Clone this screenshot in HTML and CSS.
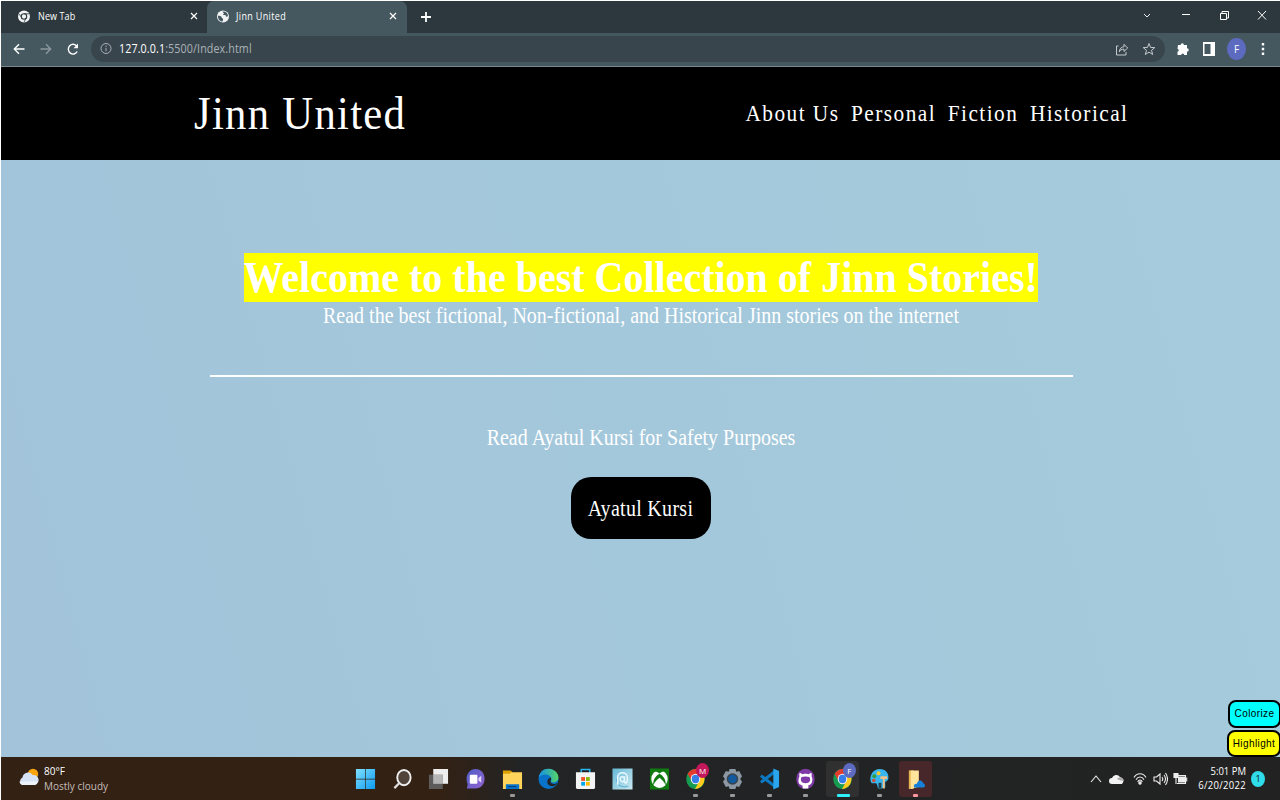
FILE: index.html
```html
<!DOCTYPE html>
<html lang="en">
<head>
<meta charset="utf-8">
<title>Jinn United</title>
<link rel="stylesheet" href="styles.css">
</head>
<body>
<div class="screen">
  <div class="tabs">
    <div class="tab">
      <svg class="fav" viewBox="0 0 12 12"><circle cx="6" cy="6" r="6" fill="#f1f3f4"/><circle cx="6" cy="6" r="2.7" fill="#f1f3f4" stroke="#2d383e" stroke-width="1.1"/><path d="M6 3.3h5M3.7 7.3 1.3 3.5M8.3 7.4 6 11.6" stroke="#2d383e" stroke-width=".8"/></svg>
      <span class="t tab-text">New Tab</span>
      <svg class="x" viewBox="0 0 8 8"><path d="m1 1 6 6M7 1 1 7"/></svg>
    </div>
    <div class="tab active">
      <svg class="fav" viewBox="0 0 12 12"><circle cx="6" cy="6" r="6" fill="#f1f3f4"/><path d="M1 5.200c2 0 4 .6 3.700 2L6.200 8.500 5.500 11C2.800 11 .8 8.500 1 5.200ZM5.500 1.300 7 3 5.800 4.600h2.600l.8 1.700 1.800-.5C10.900 3 9 1 6.600 1Z" fill="#455860"/></svg>
      <span class="t tab-text">Jinn United</span>
      <svg class="x" viewBox="0 0 8 8"><path d="m1 1 6 6M7 1 1 7"/></svg>
    </div>
    <svg class="plus" viewBox="0 0 10 10"><path d="M5 0v10M0 5h10"/></svg>
    <div class="win">
      <svg viewBox="0 0 10 12"><path d="m2 5 3 3 3-3" stroke-width=".9"/></svg>
      <svg viewBox="0 0 10 12"><path d="M1 5.500h8" stroke-width="1"/></svg>
      <svg viewBox="0 0 10 12"><path d="M1.500 4.500h6v6h-6zM3 4V2.500h6.500V9H8" stroke-width="1"/></svg>
      <svg viewBox="0 0 10 12"><path d="m1 2 8 8.500M9 2l-8 8.500"/></svg>
    </div>
  </div>
  <div class="toolbar">
    <svg class="nav-ic" viewBox="0 0 12 12"><path d="M11.500 6H1.500M6 1.300 1.300 6 6 10.700"/></svg>
    <svg class="nav-ic dim" viewBox="0 0 12 12"><path d="M.5 6h10M6 1.300 10.700 6 6 10.700"/></svg>
    <svg class="nav-ic" viewBox="0 0 12 12"><path d="M10.200 8.500A4.700 4.900 0 1 1 9.800 3.200"/><path d="M11 .5v4.700H6.500Z" fill="#fff" stroke="none"/></svg>
    <div class="address">
      <svg class="info" viewBox="0 0 12 12"><circle cx="6" cy="6" r="5"/><path d="M6 5.300v3.500M6 3v1.300"/></svg>
      <span class="t url"><b>127.0.0.1</b>:5500/Index.html</span>
      <svg class="share" viewBox="0 0 14 14"><path d="M3.500 4H1.500v9h9.500v-3M4.300 9.800C4.600 6.500 6.500 4.800 9 4.800V2.300l3.700 3.700L9 9.500V7.200C6.500 7.200 5 8 4.300 9.800Z"/></svg>
      <svg class="share star" viewBox="0 0 14 14"><path d="m7 1.500 1.500 3.900 4.300.2-3.300 2.700 1.200 4.200L7 10.100l-3.700 2.400 1.200-4.200L1.200 5.600l4.300-.2Z"/></svg>
    </div>
    <svg class="ext" viewBox="0 0 12 14"><path fill="#fff" d="M1 3h2.700a1.600 1.800 0 0 1 3.200 0H10v3.200a1.800 1.800 0 0 1 0 3.600V13H7.200a1.500 1.500 0 0 0-3 0H.5V9.800a1.600 1.600 0 0 0 0-3.100Z"/></svg>
    <svg class="ext panel" viewBox="0 0 12 14"><path d="M0 0h12v14H0z" fill="#fff"/><path d="M1.500 2h6v10h-6z" fill="#455860"/></svg>
    <span class="avatar">F</span>
    <svg class="dots" viewBox="0 0 4 14"><path fill="#fff" d="M.8 1h2.400v2.400H.8zM.8 5.800h2.400v2.400H.8zM.8 10.600h2.400V13H.8z"/></svg>
  </div>
  <header class="site-head">
    <span class="t brand">Jinn United</span>
    <nav class="menu"><span class="t">About Us</span><span class="t">Personal</span><span class="t">Fiction</span><span class="t">Historical</span></nav>
  </header>
  <main class="hero">
    <h1 class="headline"><span class="t">Welcome to the best Collection of Jinn Stories!</span></h1>
    <p class="lead"><span class="t">Read the best fictional, Non-fictional, and Historical Jinn stories on the internet</span></p>
    <div class="rule"></div>
    <p class="note"><span class="t">Read Ayatul Kursi for Safety Purposes</span></p>
    <div class="cta"><span class="t">Ayatul Kursi</span></div>
    <div class="float-buttons">
      <div class="fb cyan"><span class="t">Colorize</span></div>
      <div class="fb yellow"><span class="t">Highlight</span></div>
    </div>
  </main>
  <footer class="taskbar">
    <div class="weather">
      <svg viewBox="0 0 20 18"><circle cx="14" cy="6" r="5.200" fill="#fba50c"/><path d="M4 17a4 4 0 0 1-.5-7.500A5.500 5.500 0 0 1 13.500 7a5 5 0 0 1 2 10Z" fill="#d6e3f5"/><path d="M4 17a4 4 0 0 1-3.500-3.500h18A3.500 3.500 0 0 1 15.500 17Z" fill="#eef3fb"/></svg>
      <div class="wtext"><span class="t w1">80°F</span><span class="t w2">Mostly cloudy</span></div>
    </div>
    <div class="apps">
      <div class="app"><svg viewBox="0 0 22 22"><defs><linearGradient id="win" x2="1" y2="1"><stop stop-color="#7fe0ff"/><stop offset="1" stop-color="#0c9bf2"/></linearGradient></defs><path fill="url(#win)" d="M1 .5h9.600v10.200H1zM11.300 .5h9.700v10.200h-9.700zM1 11.400h9.600v10.200H1zM11.300 11.400h9.700v10.200h-9.700z"/></svg></div>
      <div class="app"><svg viewBox="0 0 22 22"><ellipse cx="12.500" cy="9.500" rx="7" ry="8" fill="#51443b" stroke="#eee" stroke-width="2"/><path d="m7.500 15.500-5 5" stroke="#ddd" stroke-width="2.400"/></svg></div>
      <div class="app"><svg viewBox="0 0 22 22"><path fill="#eeeeee" d="M5.500 .5h15.500v15.500H5.500z"/><path fill="#666" fill-opacity=".85" d="M1 6.500h14.500v15H1z"/><path fill="#b5b5b5" d="M5.500 6.500h10V16h-10z"/></svg></div>
      <div class="app"><svg viewBox="0 0 22 22"><defs><linearGradient id="chat" x2="1" y2="1"><stop stop-color="#4e5fc9"/><stop offset="1" stop-color="#9462cf"/></linearGradient></defs><path fill="url(#chat)" d="M11 .5c6 0 9.500 4.500 9.500 10.300 0 6-4 10.200-9.500 10.200H2l.8-4.500C-.5 9 3.500 .5 11 .5Z"/><rect x="5" y="6.500" width="8" height="9.500" rx="1.200" fill="#fff"/><path fill="#ddd4f7" d="m14 10 3-2.500v7.500l-3-2.500Z"/></svg></div>
      <div class="app"><svg viewBox="0 0 22 22"><path fill="#dca000" d="M1 2h8l2 2v5H1z"/><path fill="#ffd45a" d="M1 5.500h7L10 4h11v17.500H1z"/><path fill="#0873ca" d="M4 16.500h14v5H4z"/><path stroke="#003c75" d="M6 19h9"/></svg><i class="dot"></i></div>
      <div class="app"><svg viewBox="0 0 22 22"><defs><linearGradient id="ed" x2="1"><stop stop-color="#1690e6"/><stop offset="1" stop-color="#54d467"/></linearGradient></defs><circle cx="11" cy="11" r="10.500" fill="#0873c9"/><path fill="url(#ed)" d="M.7 9.500C2 3 6-.2 11.500.3c6 .4 10.300 5 9.900 9.700-.3 3.500-3.500 5-6.400 4.500-2-.4-1-1.500-1-3.200C14 5.500 5 4.500.7 9.500Z"/><path fill="#232323" d="M13.500 9.500c1 2-1 3.500-.3 5 1 2 5 2.200 7.300.3-1.300 2.700-4 4-7 3.600-4.500-.7-5.500-7.400 0-8.900Z"/></svg></div>
      <div class="app"><svg viewBox="0 0 22 22"><path d="M6.500 5V1h9v4" fill="none" stroke="#26b8ee" stroke-width="1.500"/><path fill="#f4f4f4" d="M1 4h20v16.500l-1 1H2l-1-1z"/><path fill="#f35325" d="M6.500 9h4v4h-4z"/><path fill="#81bc06" d="M11.500 9h4v4h-4z"/><path fill="#05a6f0" d="M6.500 14h4v4h-4z"/><path fill="#ffba08" d="M11.500 14h4v4h-4z"/></svg></div>
      <div class="app"><svg viewBox="0 0 22 22"><defs><linearGradient id="at" x2="1" y2="1"><stop stop-color="#64b7d4"/><stop offset="1" stop-color="#cceaf2"/></linearGradient></defs><path fill="url(#at)" d="M.5 0h21v22H.5z"/><path fill="none" stroke="#4ca5cc" d="M17 18.500c-5 2-13 0-12-8"/><path fill="none" stroke="#e7f9ff" stroke-width="1.600" d="M6 17V9c0-6 10-6 10 0v3c0 4-3 4-3 1V8M13 11c0-3-4.500-3-4.500 0s3.500 4 4.500 1"/></svg></div>
      <div class="app"><svg viewBox="0 0 22 22"><path fill="#107c10" d="M1 0h20v22H1z"/><ellipse cx="11" cy="11" rx="8.600" ry="9.300" fill="#fff"/><path fill="#107c10" d="M5 3.500c2-.8 4 .3 6 1.800 2-1.500 4-2.600 6-1.800C13.500 .3 8.500 .3 5 3.500ZM8.500 7.200C6 9.500 4 13.500 4.500 17.500 6.500 13.500 9 11.300 11 9.800c2 1.500 4.500 3.700 6.500 7.700.5-4-1.500-8-4-10.300L11 5.500Z"/></svg></div>
      <div class="app"><svg viewBox="0 0 22 22"><use href="#chrome"/></svg><b class="badge pink">M</b><i class="dot"></i></div>
      <div class="app"><svg viewBox="0 0 22 22"><path fill="#8b98a3" d="m8 .5 6 0 1 3 3-.8 3 5.300-2 3 2 3-3 5.300-3-.8-1 3H8l-1-3-3 .8L1 14l2-3-2-3L4 2.700l3 .8Z"/><circle cx="11" cy="11" r="5.300" fill="#12599d" stroke="#38414a" stroke-width="1.500"/></svg><i class="dot"></i></div>
      <div class="app"><svg viewBox="0 0 22 22"><path fill="none" stroke="#0c79c2" stroke-width="3.200" d="M2 7.500 17 19M2 14.500 17 3"/><path fill="#2aa5ee" d="m15 0 6 2.500v17L15 22Z"/></svg><i class="dot"></i></div>
      <div class="app"><svg viewBox="0 0 22 22"><ellipse cx="11" cy="11" rx="9.700" ry="10.700" fill="#803aa7"/><path fill="#fff" d="M5 4.500 8 6c2-.6 4-.6 6 0l3-1.500c.7 1.500.5 2.500.3 3.500 1.500 2 1.500 9-3.300 9.500v3.500H8v-3l-3-1.500C2.500 14 4 9.500 4.700 8 4.400 7 4.300 6 5 4.500Z"/><path fill="#803aa7" d="M7 9c2-.7 6-.7 8 0 2 3 .5 6.500-4 6.500S5 12 7 9Z"/></svg><i class="dot"></i></div>
      <div class="app current"><svg viewBox="0 0 22 22"><g id="chrome"><ellipse cx="11" cy="11" rx="9.700" ry="10.700" fill="#169b50"/><path fill="#e33b2e" d="M2.700 5.500C7-1.500 16-1 19.500 6H11L7 13Z"/><path fill="#ffc91e" d="M19.500 6c3 7-1.500 15.500-9 15.500L15 13 14 6Z"/><ellipse cx="11" cy="11" rx="5" ry="5.500" fill="#f3f3f3"/><ellipse cx="11" cy="11" rx="3.900" ry="4.400" fill="#367eea"/></g></svg><b class="badge blue">F</b><i class="dot cy"></i></div>
      <div class="app"><svg viewBox="0 0 22 22"><path fill="#38b5ee" d="M11 .5c7 0 10 5 9.300 10-.3 2-2 3-3.300 3.500v6L11 21.500C8 21 9.500 16 7 15.500S2 17 1.500 12C1 6 5 .5 11 .5Z"/><circle cx="10" cy="5" r="2" fill="#f9c82b"/><circle cx="5.500" cy="8" r="2" fill="#369c3a"/><circle cx="5" cy="12.500" r="1.800" fill="#d44a32"/><path fill="#263d45" d="M10 15h3v6h-3z"/><path fill="#f2bf87" d="M12 8h7v3h-7zM14.500 11h2v10h-2z"/></svg><i class="dot"></i></div>
      <div class="app alert"><svg viewBox="0 0 22 22"><path fill="#e5b34f" d="M4 2h5v19.500H4z"/><path fill="#ffe49b" d="M6 2h8.500v17L6 21.500z"/><path fill="#1681d7" d="M9.500 20c-1-3 1-4.500 3-4 1-5 6-4 6.500-.5 2.500.5 2.500 4 .5 4.500Z"/></svg><i class="dot pk"></i></div>
    </div>
    <div class="tray">
      <svg class="chev" viewBox="0 0 12 12"><path d="m1 9 5-6 5 6" /></svg>
      <svg class="cloud" viewBox="0 0 16 12"><path fill="#f3f3f3" stroke="none" d="M3 11a3 3 0 0 1 0-6 4.500 4.500 0 0 1 8-1 4 4 0 0 1 2 7Z"/><path fill="#aaa" stroke="none" d="M8 6c2-3 7-1 7 2-2-.5-4 0-7-2Z"/></svg>
      <svg class="wifi" viewBox="0 0 14 14"><path d="M1 5.500c3-5 9-5 12 0M3 7.700c2-3.700 6-3.700 8 0M4.700 10c1-2.700 3.600-2.700 4.600 0"/><circle cx="7" cy="11" r="1.200" fill="#eee"/></svg>
      <svg class="sound" viewBox="0 0 15 14"><path d="M1 5h2.500L7 2v10L3.500 9H1ZM9 5q1.500 2 0 4M11 3q3 4 0 8M12.500 1q4 6 0 12"/></svg>
      <svg class="batt" viewBox="0 0 15 14"><path d="M5 3.500h7.500v8H4"/><path d="M5.500 5h6v5h-6z" fill="#eee"/><path d="M13.700 5.500v4" /><path d="M1 1.500h4v4H1zM3 5v7" fill="#eee"/></svg>
      <div class="clock"><span class="t time">5:01 PM</span><span class="t date">6/20/2022</span></div>
      <b class="bell">1</b>
    </div>
  </footer>
</div>
</body>
</html>
```

FILE: styles.css
```css
* { box-sizing: border-box; }
body { margin: 0; background: #fff; overflow: hidden; }
.screen { width: 1280px; height: 800px; padding: 1px 0 0 1px; display: flex; flex-direction: column; font-family: "Open Sans", "Noto Sans", sans-serif; color: #fff; }
svg { display: block; flex: none; fill: none; }
.t { display: inline-block; white-space: nowrap; transform: scaleY(1.11); }

.tabs { height: 32px; flex: none; background: #2d383e; display: flex; align-items: center; }
.tab { width: 206px; height: 32px; display: flex; align-items: center; padding: 0 9px 2px 17px; }
.tab.active { width: 200px; padding: 0 10px 2px 10px; background: #455860; border-radius: 7px 7px 0 0; }
.fav { width: 12px; height: 13px; margin-right: 8px; }
.active .fav { margin-right: 7px; }
.tab-text { font-size: 9px; flex: 1; letter-spacing: 0.1px; }
.active .tab-text { letter-spacing: 0.35px; }
.x { width: 8px; height: 8px; stroke: #fff; stroke-width: 1.2; }
.plus { width: 10px; height: 10px; margin-left: 14px; stroke: #fff; stroke-width: 1.8; }
.win { display: flex; gap: 28.200px; margin-left: auto; padding-right: 13px; }
.win svg { width: 10px; height: 12px; stroke: #fff; stroke-width: 1; margin-top: -4px; }

.toolbar { height: 34px; flex: none; background: #455860; border-bottom: 1px solid #77888f; display: flex; align-items: center; padding: 0 0 2px 12px; }
.nav-ic { width: 12px; height: 12px; margin-right: 15px; stroke: #fff; stroke-width: 1.4; }
.nav-ic.dim { stroke: #8b979c; }
.address { width: 1074px; height: 26px; margin-left: -3px; border-radius: 13px; background: #39454c; display: flex; align-items: center; padding: 0 9px 0 9px; }
.info { width: 12px; height: 13px; stroke: #a9b1b5; stroke-width: 1; margin-right: 7px; }
.url { font-size: 10.700px; color: #a9b3b9; flex: 1; letter-spacing: 0.12px; }
.url b { font-weight: 400; color: #fff; }
.share { width: 14px; height: 14px; margin-left: 12px; stroke: #c3c9cc; stroke-width: 1; }
.star { margin-left: 13px; }
.ext { width: 12px; height: 14px; margin-left: 12px; }
.panel { margin-left: 14px; }
.avatar { width: 19px; height: 22px; border-radius: 50%; background: #5c6bc0; margin-left: 12px; font-size: 10px; line-height: 22px; text-align: center; }
.dots { width: 4px; height: 14px; margin-left: 15px; }

.site-head { height: 93px; flex: none; background: #000; display: flex; align-items: center; justify-content: space-between; padding: 0 151.500px 0 193px; font-family: "Liberation Serif", serif; }
.brand { font-size: 42.670px; letter-spacing: 1.300px; margin-top: -2px; }
.menu { display: flex; gap: 11.600px; font-size: 21.330px; letter-spacing: 1.450px; }

.hero { height: 597px; flex: none; position: relative; display: flex; flex-direction: column; align-items: center; padding-top: 93px; background: linear-gradient(75deg, #a2c3da, #a4c8db 50%, #a5cbdc); font-family: "Liberation Serif", serif; }
.headline { margin: 0; width: 794px; height: 49px; background: #ff0; font-size: 40px; line-height: 49px; text-align: center; }
.lead, .note { margin: -1px 0 1px; font-size: 20px; line-height: 28px; text-align: center; padding-left: 1px; }
.rule { width: 863px; height: 2px; background: #fff; margin: 45px 0 47px 2px; }
.cta { width: 140px; height: 62px; margin-top: 25px; border-radius: 20px; background: #000; font-size: 20px; letter-spacing: 0.3px; line-height: 62px; text-align: center; }
.float-buttons { position: absolute; right: -1px; bottom: 0; width: 54px; display: flex; flex-direction: column; align-items: flex-end; gap: 2px; font-family: "Liberation Sans", sans-serif; font-size: 10px; letter-spacing: 0.4px; color: #000; }
.fb { border: 2px solid #000; border-radius: 8px; height: 28px; line-height: 23px; text-align: center; }
.cyan { background: #0ff; width: 53px; }
.yellow { background: #ff0; width: 54px; height: 27px; }

.taskbar { height: 43px; flex: none; display: flex; align-items: center; background: linear-gradient(90deg, #332114 0, #332114 440px, #222425 520px, #222 100%); }
.weather { width: 346px; display: flex; align-items: center; padding-left: 18px; }
.weather svg { width: 20px; height: 18px; margin-right: 5px; margin-top: -3px; }
.wtext { display: flex; flex-direction: column; font-size: 10px; line-height: 15px; }
.w2 { color: #c5beb9; }
.apps { display: grid; grid-template-columns: repeat(16, 36.700px); height: 43px; align-items: center; }
.app { position: relative; height: 36px; width: 33px; display: flex; justify-content: center; padding-top: 7px; margin-left: 2px; }
.app svg { width: 21px; height: 22px; }
.current { background: #303030; border-radius: 3px; }
.alert { background: #472729; border-radius: 3px; }
.dot { position: absolute; bottom: 0; left: 14px; width: 5px; height: 3px; background: #999; border-radius: 1px; }
.dot.cy { left: 11px; width: 13px; background: #2ef0fa; }
.dot.pk { background: #ff96a1; }
.badge { position: absolute; left: 17px; top: 2px; width: 13px; height: 15px; border-radius: 50%; font-size: 8px; line-height: 15px; font-weight: 400; text-align: center; }
.pink { background: #c2185b; }
.blue { background: #5c6bc0; }
.tray { display: flex; align-items: center; margin-left: auto; padding-right: 15px; }
.tray svg { stroke: #eee; stroke-width: 1.1; }
.chev { width: 12px; height: 12px; margin-right: 7px; }
.cloud { width: 16px; height: 12px; margin-right: 8px; }
.wifi { width: 14px; height: 14px; margin-right: 6px; }
.sound { width: 15px; height: 14px; margin-right: 5px; }
.batt { width: 15px; height: 14px; }
.clock { width: 58px; display: flex; flex-direction: column; align-items: flex-end; font-size: 9.500px; line-height: 14px; }
.date { letter-spacing: 0.3px; }
.bell { width: 14px; height: 16px; margin-left: 5px; border-radius: 50%; background: #2edcea; color: #111; font-size: 9px; font-weight: 400; line-height: 16px; text-align: center; }
```
